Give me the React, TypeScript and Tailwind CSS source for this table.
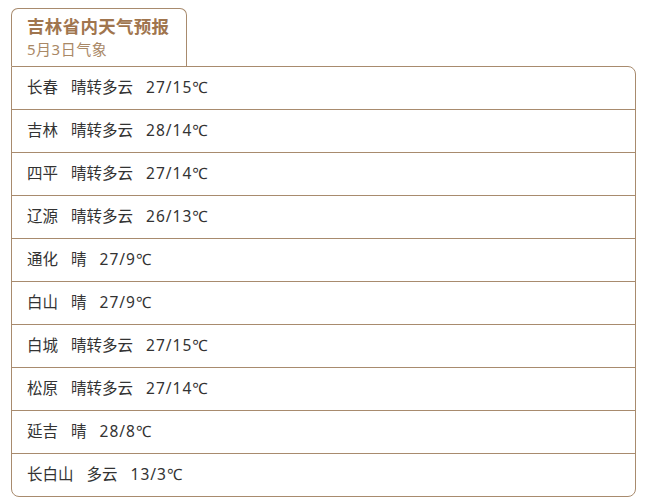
import React from "react";

const rows: [string, string, string][] = [
  ["长春", "晴转多云", "27/15℃"],
  ["吉林", "晴转多云", "28/14℃"],
  ["四平", "晴转多云", "27/14℃"],
  ["辽源", "晴转多云", "26/13℃"],
  ["通化", "晴", "27/9℃"],
  ["白山", "晴", "27/9℃"],
  ["白城", "晴转多云", "27/15℃"],
  ["松原", "晴转多云", "27/14℃"],
  ["延吉", "晴", "28/8℃"],
  ["长白山", "多云", "13/3℃"],
];

export default function App() {
  return (
    <div
      className="w-[646px] h-[500px] bg-white pl-[11px] pt-[8px] flex flex-col"
      style={{ fontFamily: '"Noto Sans", "Noto Sans CJK SC", sans-serif' }}
    >
      <div className="w-[176px] h-[58px] border border-b-0 border-[#a88b6e] rounded-t-[7px] pl-[15px] flex flex-col">
        <div className="text-[17.5px] font-bold text-[#a0754e] leading-[22px] mt-[6px] tracking-[0.3px]">吉林省内天气预报</div>
        <div className="text-[15px] text-[#a98866] leading-[20px] mt-[2px] tracking-[0.5px]">5月3日气象</div>
      </div>
      <div className="w-[625px] border border-[#a88b6e] rounded-b-[8px] rounded-tr-[8px] flex flex-col">
        {rows.map((r, i) => (
          <div
            key={i}
            className={`flex items-center pl-[15px] gap-[13px] text-[15.5px] text-[#333333] ${
              i < rows.length - 1 ? "border-b border-[#a88b6e] h-[43px]" : "h-[42px]"
            }`}
          >
            <span>{r[0]}</span>
            <span>{r[1]}</span>
            <span className="tracking-[1px]">{r[2]}</span>
          </div>
        ))}
      </div>
    </div>
  );
}
